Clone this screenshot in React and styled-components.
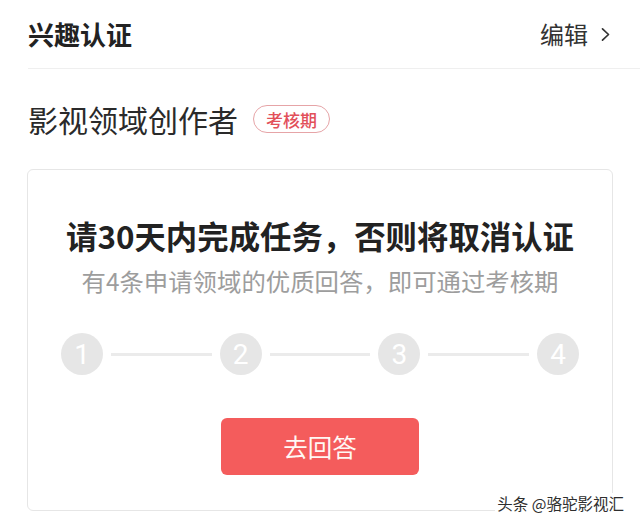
import React from "react";
import styled, { createGlobalStyle } from "styled-components";

const Global = createGlobalStyle`
  html, body { margin: 0; padding: 0; background: #ffffff; }
  body { font-family: "Noto Sans CJK SC", "Noto Sans", sans-serif; }
  * { box-sizing: border-box; }
`;

const Page = styled.div`
  position: relative;
  width: 640px;
  height: 526px;
  background: #fff;
  overflow: hidden;
`;

const Header = styled.div`
  height: 69px;
  margin-left: 28px;
  padding-right: 30px;
  display: flex;
  align-items: center;
  justify-content: space-between;
  border-bottom: 1px solid #efefef;
`;

const Title = styled.div`
  font-size: 26px;
  font-weight: 700;
  color: #222;
  line-height: 34px;
`;

const Edit = styled.div`
  display: flex;
  align-items: center;
  gap: 13px;
  font-size: 24px;
  color: #333;
  line-height: 32px;
`;

const Field = styled.div`
  height: 100px;
  padding-left: 28px;
  display: flex;
  align-items: center;
  gap: 15px;
`;

const FieldName = styled.div`
  font-size: 30px;
  color: #2a2a2a;
  line-height: 40px;
`;

const Badge = styled.span`
  height: 28px;
  padding: 0 12px;
  border: 1px solid #e6a4a7;
  border-radius: 14px;
  display: inline-flex;
  align-items: center;
  font-size: 17px;
  font-weight: 500;
  color: #e2505a;
  line-height: 1;
`;

const Card = styled.div`
  margin: 0 27px;
  height: 342px;
  border: 1px solid #e6e6e6;
  border-radius: 6px;
  padding-top: 46px;
  display: flex;
  flex-direction: column;
  align-items: center;
`;

const Heading = styled.div`
  font-size: 31.4px;
  font-weight: 700;
  color: #222;
  line-height: 40px;
  white-space: nowrap;
`;

const Sub = styled.div`
  margin-top: 9px;
  font-size: 24.4px;
  color: #9d9d9d;
  line-height: 32px;
  white-space: nowrap;
`;

const Steps = styled.div`
  margin-top: 36px;
  width: 518px;
  display: flex;
  align-items: center;
  gap: 8px;
`;

const Step = styled.div`
  width: 42px;
  height: 42px;
  flex: none;
  border-radius: 50%;
  background: #e6e6e6;
  color: #fff;
  display: flex;
  align-items: center;
  justify-content: center;
  font-family: Roboto, "Liberation Sans", sans-serif;
  font-size: 28px;
  font-weight: 400;
`;

const Line = styled.div`
  flex: 1;
  height: 3px;
  background: #ebebeb;
`;

const Button = styled.button`
  margin-top: 43px;
  width: 198px;
  height: 57px;
  border: none;
  border-radius: 6px;
  background: #f45c5c;
  color: #fff8f4;
  font-family: "Noto Sans CJK SC", sans-serif;
  font-size: 24.5px;
  cursor: pointer;
`;

const Watermark = styled.div`
  position: absolute;
  right: 14px;
  bottom: 13px;
  padding: 0 2px;
  font-size: 15.5px;
  line-height: 20px;
  color: #2e2e2e;
  background: #fff;
  text-shadow: 0 0 2px #fff;
`;

const Chevron = () => (
  <svg width="9" height="15" viewBox="0 0 9 15">
    <polyline points="1.5,1.8 7.5,7.5 1.5,13.2" fill="none" stroke="#333" strokeWidth="1.7" strokeLinecap="round" strokeLinejoin="round" />
  </svg>
);

export default function App() {
  const steps = ["1", "2", "3", "4"];
  return (
    <Page>
      <Global />
      <Header>
        <Title>兴趣认证</Title>
        <Edit>
          编辑
          <Chevron />
        </Edit>
      </Header>
      <Field>
        <FieldName>影视领域创作者</FieldName>
        <Badge>考核期</Badge>
      </Field>
      <Card>
        <Heading>请30天内完成任务，否则将取消认证</Heading>
        <Sub>有4条申请领域的优质回答，即可通过考核期</Sub>
        <Steps>
          {steps.map((s, i) => (
            <React.Fragment key={s}>
              {i > 0 && <Line />}
              <Step>{s}</Step>
            </React.Fragment>
          ))}
        </Steps>
        <Button>去回答</Button>
      </Card>
      <Watermark>头条 @骆驼影视汇</Watermark>
    </Page>
  );
}
